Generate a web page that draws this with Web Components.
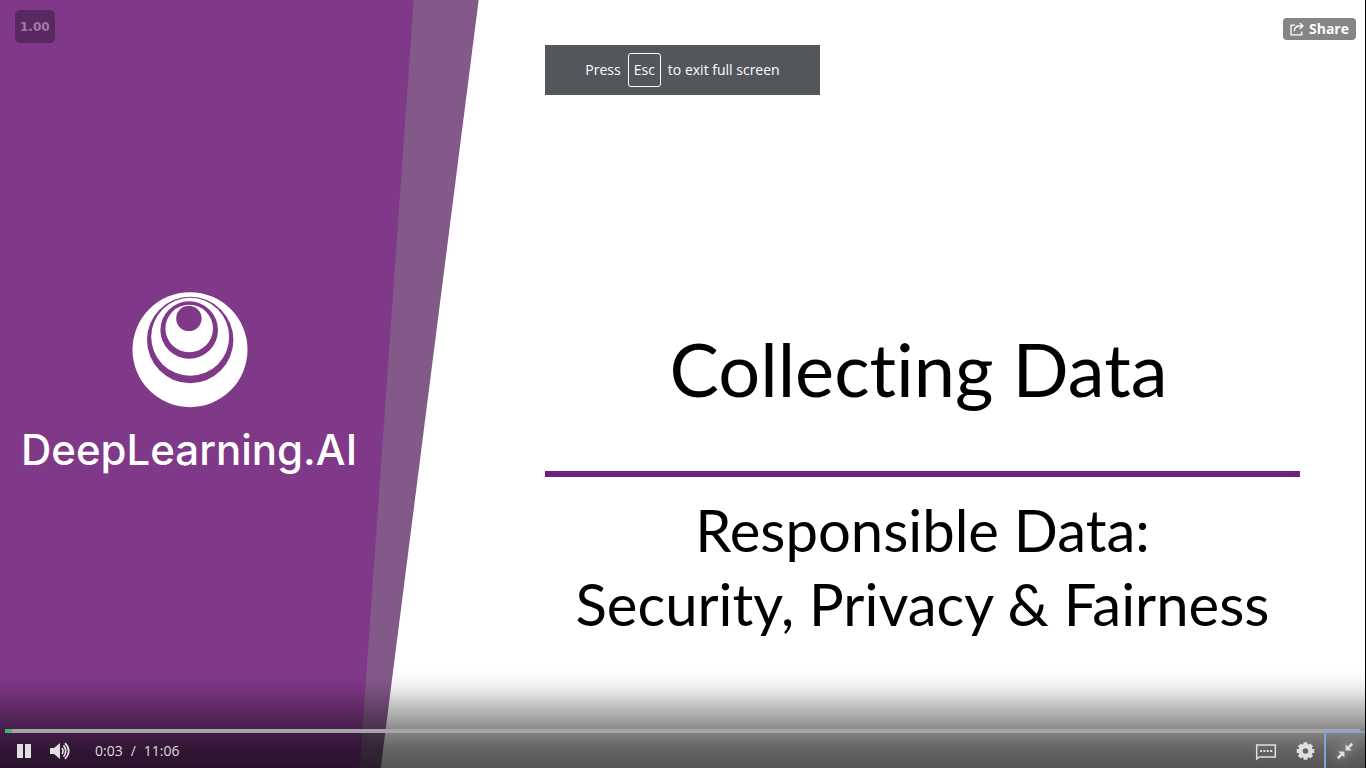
<!DOCTYPE html>
<html lang="en">
<head>
<meta charset="utf-8">
<title>Collecting Data</title>
<meta name="viewport" content="width=device-width, initial-scale=1">
<style>
  html, body { margin: 0; height: 100%; background: #000; overflow: hidden; }
  body { font-family: "Open Sans", "Noto Sans", sans-serif; }
</style>
</head>
<body>
<video-player>
  <title-slide slot="frame">
    <brand-mark slot="brand">DeepLearning.AI</brand-mark>
    <span slot="title">Collecting Data</span>
    <span slot="subtitle">Responsible Data:<br>Security, Privacy &amp; Fairness</span>
  </title-slide>
  <speed-badge slot="speed">1.00</speed-badge>
  <exit-hint slot="hint"></exit-hint>
  <share-button slot="share">Share</share-button>
  <control-bar slot="controls"></control-bar>
</video-player>

<script>
function define(name, html) {
  const template = document.createElement('template');
  template.innerHTML = html;
  customElements.define(name, class extends HTMLElement {
    constructor() {
      super();
      this.attachShadow({ mode: 'open' }).append(template.content.cloneNode(true));
    }
  });
}

define('brand-mark', `
  <style>
    :host { display: flex; flex-direction: column; align-items: center; gap: 16px; color: #fff;
      font: 500 42px/52px Inter, sans-serif; white-space: nowrap; }
    svg { width: 116px; height: 116px; display: block; overflow: visible; }
  </style>
  <svg viewBox="0 0 116 116" aria-hidden="true">
    <circle cx="59" cy="57.7" r="57.5" fill="#fff"/>
    <circle cx="59.2" cy="48" r="43.2" fill="#803888"/>
    <circle cx="59.2" cy="44.8" r="39" fill="#fff"/>
    <circle cx="58.2" cy="38" r="28.8" fill="#803888"/>
    <circle cx="58.2" cy="36.5" r="23.8" fill="#fff"/>
    <circle cx="57.9" cy="26.4" r="12.7" fill="#803888"/>
  </svg>
  <slot></slot>`);

define('title-slide', `
  <style>
    :host { display: grid; grid-template-columns: 36fr 94fr; height: 100%; position: relative; background: #fff; }
    .backdrop { position: absolute; inset: 0; width: 100%; height: 100%; }
    .brand { position: relative; display: grid; place-items: center; }
    .text { position: relative; display: flex; flex-direction: column; justify-content: center;
      padding: 198px 65px 0 167px; text-align: center; color: #000; font-family: Lato, sans-serif; white-space: nowrap;
      font-variant-ligatures: none; }
    h1, h2 { margin: 0; font-weight: 400; display: flex; flex-direction: column; align-items: center; }
    h1 { padding-right: 8px; font-size: 74px; line-height: 86px; }
    h2 { font-size: 58px; line-height: 74px; }
    hr { width: 100%; height: 6px; margin: 59px 0 16px; border: 0; background: #6e2180; }
  </style>
  <svg class="backdrop" viewBox="0 0 1366 768" preserveAspectRatio="none" aria-hidden="true">
    <path d="M0 0H479L381 768H0Z" fill="#83598a"/>
    <path d="M0 0H414L360 768H0Z" fill="#803888"/>
  </svg>
  <div class="brand"><slot name="brand"></slot></div>
  <div class="text">
    <h1><slot name="title"></slot></h1>
    <hr>
    <h2><slot name="subtitle"></slot></h2>
  </div>`);

define('speed-badge', `
  <style>
    :host { display: block; padding: 1px 5px 0; border-radius: 5px; background: #5a2860; color: #a578aa;
      font: bold 12px/32px "DejaVu Sans", sans-serif; }
  </style>
  <slot></slot>`);

define('share-button', `
  <style>
    :host { display: block; }
    button { display: flex; align-items: center; gap: 5px; height: 22px; padding: 0 7px; border: 0;
      border-radius: 4px; background: #858585; color: #fff; font: 700 14px/22px "Open Sans", sans-serif; }
    svg { width: 14px; height: 14px; }
  </style>
  <button type="button">
    <svg viewBox="0 0 14 14" fill="none" stroke="#fff" stroke-width="1.3" aria-hidden="true">
      <path d="M5 3.2H1V12.8H11.8V9.5M4.3 9.2C4.6 5.8 6.5 4 9.2 4H12.5M9.8 1L13 4L9.8 7"/>
    </svg>
    <slot></slot>
  </button>`);

define('exit-hint', `
  <style>
    :host { display: flex; align-items: center; justify-content: center; gap: 7px; padding: 8px 40px;
      background: #53565b; color: #fff; font-size: 14px; line-height: 20px; white-space: nowrap; }
    kbd { padding: 6px 5px; border: 1px solid #fff; border-radius: 3px; font: inherit; }
  </style>
  <span>Press</span><kbd>Esc</kbd><span>to exit full screen</span>`);

define('control-bar', `
  <style>
    :host { display: flex; flex-direction: column; justify-content: flex-end; height: 100px; color: #ddd;
      background: linear-gradient(to bottom, transparent 0, rgba(0,0,0,.02) 10px, rgba(0,0,0,.09) 22px,
        rgba(0,0,0,.25) 39px, rgba(0,0,0,.4) 55px, rgba(0,0,0,.51) 67px, rgba(0,0,0,.61) 82px, rgba(0,0,0,.67) 100px); }
    input { -webkit-appearance: none; appearance: none; display: block; height: 4px; margin: 0 5px; border-radius: 0;
      background: linear-gradient(to right, #3db575 7px, #a6a4a6 7px); outline: none; }
    input::-webkit-slider-thumb { -webkit-appearance: none; width: 0; height: 0; }
    .row { display: flex; align-items: stretch; height: 35px; }
    button { display: grid; place-items: center; width: 36px; padding: 0; border: 0; background: none; color: #e0e0e0; }
    svg { display: block; width: 20px; height: 20px; }
    .play { margin-left: 6px; }
    .time { display: flex; gap: 8px; margin-left: 17px; font-size: 14px; line-height: 35px; }
    .right { display: flex; margin-left: auto; }
    .right button { width: 40px; }
    .right .full { width: 41px; margin-top: -2px; padding-right: 2px; border: 2px solid #7fa3e0;
      border-width: 2px 0 0 2px; outline: none; }
    .full svg { filter: drop-shadow(0 0 6px rgba(255,255,255,.6)); }
    .right .settings { width: 38px; }
    .right .captions svg { width: 22px; }
  </style>
  <input type="range" min="0" max="666" value="3" aria-label="Seek">
  <div class="row">
    <button class="play" type="button" aria-label="Pause">
      <svg viewBox="0 0 20 20"><path d="M3 3H9V17H3ZM11 3H17V17H11Z" fill="currentColor"/></svg>
    </button>
    <button type="button" aria-label="Mute">
      <svg viewBox="0 0 20 20"><path d="M0 7H4L10 2V18L4 13H0Z" fill="currentColor"/>
        <path d="M12 7Q14 10 12 13M13.5 4.3Q18 10 13.5 15.7M15 2.2Q22.4 10 15 17.8" fill="none" stroke="currentColor" stroke-width="1.7"/></svg>
    </button>
    <div class="time"><span>0:03</span><span>/</span><span>11:06</span></div>
    <div class="right">
      <button class="captions" type="button" aria-label="Subtitles">
        <svg viewBox="0 0 22 20"><path d="M1.7 18V4H20.3V16H4.5Z" fill="none" stroke="currentColor" stroke-width="1.5"/>
          <path d="M5 9h2v2H5zM8.4 9h2v2h-2zM11.8 9h2v2h-2zM15.2 9h2v2h-2z" fill="currentColor"/></svg>
      </button>
      <button class="settings" type="button" aria-label="Settings">
        <svg viewBox="0 0 20 20"><circle cx="10.5" cy="10" r="5" fill="none" stroke="currentColor" stroke-width="4.4"/>
          <path d="M10.5 1.2V4M10.5 16V18.8M1.7 10H4.5M16.5 10H19.3M4.3 3.8L6.5 6M14.5 14L16.7 16.2M16.7 3.8L14.5 6M6.5 14L4.3 16.2" stroke="currentColor" stroke-width="4"/></svg>
      </button>
      <button class="full" type="button" aria-label="Exit full screen">
        <svg viewBox="0 0 20 20" fill="currentColor"><path d="M10.6 9.4V3.4L12.7 5.5L16.2 1.8L18.2 3.8L14.5 7.3L16.6 9.4ZM9.4 10.6V16.6L7.3 14.5L3.8 18.2L1.8 16.2L5.5 12.7L3.4 10.6Z"/></svg>
      </button>
    </div>
  </div>`);

define('video-player', `
  <style>
    :host { display: block; position: relative; height: 100vh; min-height: 660px; box-sizing: border-box;
      border-right: 1px solid #000; overflow: hidden; }
    div { position: absolute; }
    .speed { top: 10px; left: 15px; }
    .hint { top: 45px; left: 0; right: 0; display: flex; justify-content: center; }
    .share { top: 18px; right: 9px; }
    .controls { left: 0; right: 0; bottom: 0; }
  </style>
  <slot name="frame"></slot>
  <div class="speed"><slot name="speed"></slot></div>
  <div class="hint"><slot name="hint"></slot></div>
  <div class="share"><slot name="share"></slot></div>
  <div class="controls"><slot name="controls"></slot></div>`);
</script>
</body>
</html>
